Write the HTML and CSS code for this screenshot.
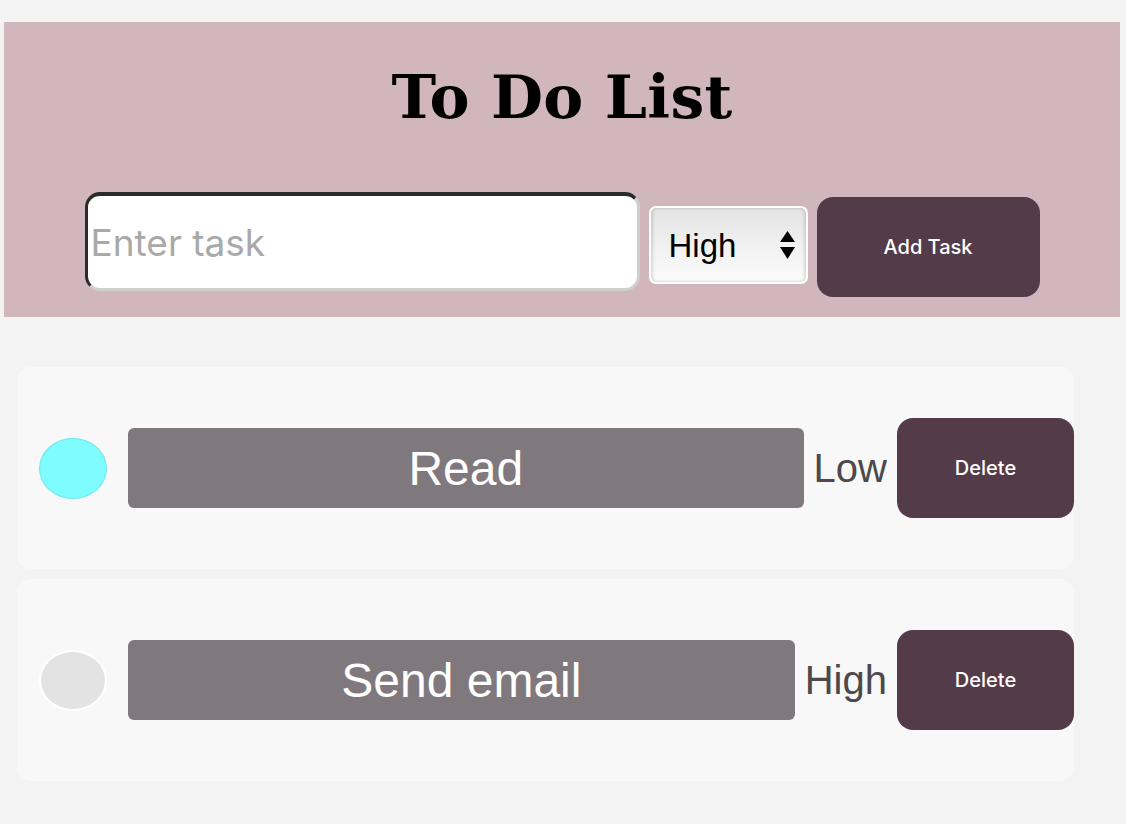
FILE: index.html
```html
<!DOCTYPE html>
<html lang="en">
<head>
<meta charset="utf-8">
<title>To Do List</title>
<link rel="stylesheet" href="styles.css">
</head>
<body>
<header class="header">
  <h1 class="title">To Do List</h1>
  <div class="entry">
    <input class="task-input" type="text" placeholder="Enter task">
    <div class="priority-wrap">
      <select class="priority">
        <option>High</option>
        <option>Medium</option>
        <option>Low</option>
      </select>
      <svg class="select-arrows" viewBox="0 0 15 28" aria-hidden="true">
        <polygon points="7.5,0 15,11 0,11" fill="#000"/>
        <polygon points="0,16 15,16 7.5,28" fill="#000"/>
      </svg>
    </div>
    <button class="btn add-btn">Add Task</button>
  </div>
</header>
<ul class="tasks">
  <li class="task">
    <span class="check check-done"></span>
    <span class="task-text">Read</span>
    <span class="task-priority">Low</span>
    <button class="btn delete-btn">Delete</button>
  </li>
  <li class="task">
    <span class="check"></span>
    <span class="task-text">Send email</span>
    <span class="task-priority">High</span>
    <button class="btn delete-btn">Delete</button>
  </li>
</ul>
</body>
</html>
```
FILE: styles.css
```css
* { box-sizing: border-box; }

body {
  margin: 0;
  padding: 22px 6px 0 4px;
  background: #f3f3f3;
  font-family: "Liberation Sans", Arial, sans-serif;
}

.header {
  background: #d1b7bd;
  padding: 41px 0 20px;
}

.title {
  margin: 0;
  text-align: center;
  font-family: "DejaVu Serif", "Liberation Serif", serif;
  font-weight: bold;
  font-size: 60px;
  line-height: 68px;
  letter-spacing: 0.3px;
  color: #000;
}

.entry {
  margin-top: 61px;
  display: flex;
  justify-content: center;
  align-items: flex-start;
}

.task-input {
  width: 555px;
  height: 99px;
  margin: 0 9px 0 0;
  border: 3px solid;
  border-top-width: 4px;
  border-color: #2b2b2b #cfcfcf #cfcfcf #2b2b2b;
  border-radius: 15px;
  padding: 0 3px;
  background: #fff;
  font-family: Inter, "Noto Sans", sans-serif;
  font-size: 37px;
  color: #000;
  outline: none;
}

.task-input::placeholder {
  color: #a9a9a9;
}

.priority-wrap {
  position: relative;
  width: 159px;
  height: 78px;
  margin: 14px 9px 0 0;
}

.priority {
  appearance: none;
  -webkit-appearance: none;
  width: 100%;
  height: 100%;
  border: 2px solid #fff;
  border-radius: 7px;
  padding: 0 0 0 18px;
  background: linear-gradient(#e3e3e3, #f3f3f3 60%, #fbfbfb);
  box-shadow: inset 2px 0 3px rgba(0,0,0,0.12), inset -2px 0 3px rgba(0,0,0,0.12);
  font-family: "Liberation Sans", Arial, sans-serif;
  font-size: 33px;
  color: #000;
  outline: none;
}

.select-arrows {
  position: absolute;
  left: 131px;
  top: 25px;
  width: 15px;
  height: 28px;
  pointer-events: none;
}

.btn {
  border: none;
  background: #543b4a;
  color: #fff;
  border-radius: 16px;
  font-family: Inter, "Noto Sans", sans-serif;
  font-weight: 500;
  font-size: 20px;
  cursor: pointer;
}

.add-btn {
  width: 223px;
  height: 100px;
  margin-top: 5px;
}

.tasks {
  list-style: none;
  margin: 50px 46px 0 13px;
  padding: 0;
  display: flex;
  flex-direction: column;
  gap: 10px;
}

.task {
  display: flex;
  align-items: center;
  padding: 51px 0 51px 22px;
  background: #f8f8f8;
  border-radius: 14px;
}

.check {
  flex-shrink: 0;
  width: 68px;
  height: 61px;
  border-radius: 50%;
  background: #e3e3e3;
  border: 2px solid #fff;
}

.check-done {
  background: #7ffcfd;
  border: 1px solid #6ee8ee;
}

.task-text {
  flex: 1;
  margin-left: 21px;
  height: 80px;
  border-radius: 6px;
  background: #7f797d;
  color: #fff;
  font-size: 48px;
  display: flex;
  align-items: center;
  justify-content: center;
}

.task-priority {
  margin: 0 10px;
  font-size: 40px;
  color: #4d484b;
}

.delete-btn {
  flex-shrink: 0;
  width: 177px;
  height: 100px;
}
```
